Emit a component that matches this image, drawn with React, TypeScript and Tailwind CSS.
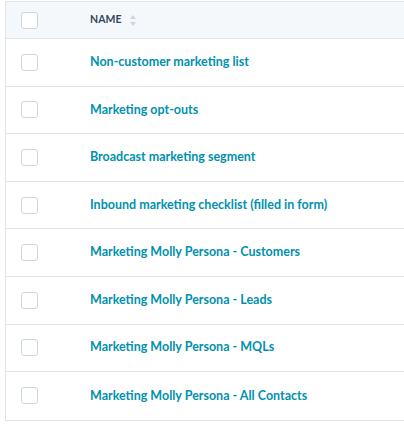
import React from "react";

const rows = [
  "Non-customer marketing list",
  "Marketing opt-outs",
  "Broadcast marketing segment",
  "Inbound marketing checklist (filled in form)",
  "Marketing Molly Persona - Customers",
  "Marketing Molly Persona - Leads",
  "Marketing Molly Persona - MQLs",
  "Marketing Molly Persona - All Contacts",
];

function Box() {
  return <div className="w-[17px] h-[17px] rounded-[3px] border border-[#cbd6e2] bg-white shrink-0" />;
}

export default function App() {
  return (
    <div className="w-[404px] h-[424px] bg-white pt-[1px] pl-[5px] overflow-hidden" style={{ fontFamily: "Lato, 'Open Sans', sans-serif" }}>
      <div className="w-[420px] border-l border-t border-b border-[#dfe3eb]">
        <div className="h-[37px] bg-[#f5f8fa] flex items-center pl-[15px] border-b border-[#dfe3eb]">
          <Box />
          <div className="ml-[52px] flex items-center">
            <span className="text-[10.5px] font-bold text-[#33475b] tracking-[0.1px]">NAME</span>
            <svg width="6" height="11" viewBox="0 0 6 11" className="ml-[8px]">
              <path d="M3 0 L6 4 L0 4 Z" fill="#cbd6e2" />
              <path d="M3 11 L6 7 L0 7 Z" fill="#cbd6e2" />
            </svg>
          </div>
        </div>
        {rows.map((r, i) => (
          <div
            key={i}
            className={`h-[47.6px] flex items-center pl-[15px] ${i < rows.length - 1 ? "border-b border-[#dfe3eb]" : ""}`}
          >
            <Box />
            <span className="ml-[52px] text-[12.5px] font-bold text-[#0091ae]">{r}</span>
          </div>
        ))}
      </div>
    </div>
  );
}
